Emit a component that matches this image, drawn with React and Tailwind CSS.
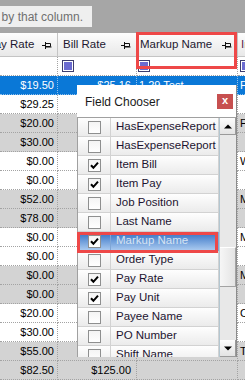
import React from 'react'

const rows = [
  { rate: '$19.50', bill: '$25.16', markup: '1.29 Test', extra: 'Full Time', sel: true },
  { rate: '$29.25' },
  { rate: '$20.00', extra: 'Full Time' },
  { rate: '$30.00' },
  { rate: '$0.00', extra: 'Weekly' },
  { rate: '$0.00' },
  { rate: '$52.00', extra: 'Monthly' },
  { rate: '$78.00' },
  { rate: '$0.00', extra: 'Monthly' },
  { rate: '$0.00' },
  { rate: '$0.00', extra: 'Monthly' },
  { rate: '$0.00' },
  { rate: '$20.00', extra: 'Contract' },
  { rate: '$30.00' },
  { rate: '$55.00', extra: 'Temp' },
  { rate: '$82.50', bill: '$125.00' },
]

const fields = [
  { name: 'HasExpenseReport', on: false },
  { name: 'HasExpenseReport', on: false },
  { name: 'Item Bill', on: true },
  { name: 'Item Pay', on: true },
  { name: 'Job Position', on: false },
  { name: 'Last Name', on: false },
  { name: 'Markup Name', on: true, sel: true },
  { name: 'Order Type', on: false },
  { name: 'Pay Rate', on: true },
  { name: 'Pay Unit', on: true },
  { name: 'Payee Name', on: false },
  { name: 'PO Number', on: false },
  { name: 'Shift Name', on: false },
]

function Pin() {
  return (
    <svg width="10" height="8" viewBox="0 0 10 8" className="shrink-0">
      <path d="M0 4.5h3.5M3.5 1v7M3.5 2.5h5v3h-5" stroke="#111" fill="none" strokeWidth="1" />
      <path d="M3.5 6h6" stroke="#111" strokeWidth="1" />
    </svg>
  )
}

function FilterIcon() {
  return (
    <span className="w-[12px] h-[12px] border border-[#3d3d6e] bg-white p-[1px] shrink-0">
      <span className="block w-full h-full bg-[#6b6bd0]" />
    </span>
  )
}

function HeaderCell({ width, children, pin = true, pad = 'pl-[4px]' }) {
  return (
    <div
      className={`${width} shrink-0 h-full flex items-center justify-between overflow-hidden whitespace-nowrap ${pad} pr-[5px] bg-linear-to-b from-[#fdfdfd] to-[#e8e8e8] border-r border-b border-[#c4c4c4]`}
    >
      {children}
      {pin && <Pin />}
    </div>
  )
}

function GridRow({ r, i }) {
  const gray = Math.floor(i / 2) % 2 === 1
  const bg = r.sel ? 'bg-[#0a78d7] text-white' : gray ? 'bg-[#d3d3d3] text-black' : 'bg-white text-black'
  const line = r.sel ? 'border-[#8fc0ec]' : 'border-[#a3a3a3]'
  return (
    <div className={`flex h-[19px] text-[11px] leading-none ${bg}`}>
      <div className={`w-[58px] shrink-0 border-r border-b border-dotted ${line} flex items-center justify-end pr-[3px]`}>
        {r.rate}
      </div>
      <div className={`w-[79px] shrink-0 border-r border-b border-dotted ${line} flex items-center justify-end pr-[5px]`}>
        {r.bill}
      </div>
      <div className={`w-[101px] shrink-0 border-r border-b border-dotted ${line} flex items-center pl-[2px]`}>
        {r.markup}
      </div>
      <div className={`flex-1 border-b border-dotted ${line} flex items-center pl-[2px] whitespace-nowrap overflow-hidden`}>
        {r.extra}
      </div>
    </div>
  )
}

function Check({ on }) {
  return (
    <span className="w-[13px] h-[13px] border border-[#8e8f8f] bg-linear-to-b from-[#f4f4f4] to-white flex items-center justify-center">
      {on && (
        <svg width="9" height="9" viewBox="0 0 9 9">
          <path d="M1 4.2L3.4 6.8L8 1.6" stroke="#000" strokeWidth="2" fill="none" />
        </svg>
      )}
    </span>
  )
}

function FieldRow({ f }) {
  const cell = f.sel
    ? 'bg-linear-to-b from-[#2f6fc2] to-[#a9c9ef] border-[#7fa6d6]'
    : 'bg-linear-to-b from-[#fefefe] to-[#ebebeb] border-[#d2d2d2]'
  return (
    <div className="flex h-[19px] shrink-0">
      <div className={`w-[33px] shrink-0 border-r border-b flex items-center pl-[10px] ${cell}`}>
        <Check on={f.on} />
      </div>
      <div
        className={`w-[108px] shrink-0 border-r border-b flex items-center pl-[5px] text-[11.5px] whitespace-nowrap ${cell} ${
          f.sel ? 'text-[#d6e3f2]' : 'text-[#1c1430]'
        }`}
      >
        {f.name}
      </div>
    </div>
  )
}

function Arrow({ up }) {
  return (
    <div className="h-[17px] shrink-0 bg-linear-to-b from-[#fdfdfd] to-[#e3e3e3] border-r border-b border-[#9a9a9a] flex items-center justify-center">
      <svg width="8" height="5" viewBox="0 0 8 5">
        <path d={up ? 'M0 4.5L4 0.5L8 4.5Z' : 'M0 0.5L4 4.5L8 0.5Z'} fill="#000" />
      </svg>
    </div>
  )
}

function FieldChooser() {
  return (
    <div className="absolute left-[77px] top-[85px] w-[160px] h-[272px] bg-white flex flex-col border-r border-[#8c8c8c]">
      <div className="h-[32px] shrink-0 flex items-center justify-between pl-[8px] pr-[3px] pt-[1px]">
        <span className="text-[12px] text-[#1a1a1a]">Field Chooser</span>
        <span className="w-[16px] h-[15px] bg-[#c75050] text-white text-[11px] font-bold leading-none flex items-center justify-center pb-[2px]">
          x
        </span>
      </div>
      <div className="flex-1 flex border-t border-l border-[#a0a0a0] overflow-hidden">
        <div className="flex flex-col">
          {fields.map((f, i) => (
            <FieldRow key={i} f={f} />
          ))}
        </div>
        <div className="w-[17px] shrink-0 flex flex-col bg-[#e8e8e8] border-l border-[#b3c6d0]">
          <Arrow up />
          <div className="h-[112px] shrink-0" />
          <div className="h-[40px] shrink-0 bg-linear-to-r from-[#f6f6f6] to-[#e4e4e4] border-r border-b border-[#a3a3a3] border-t border-t-white" />
          <div className="flex-1" />
          <Arrow />
        </div>
      </div>
      <div className="absolute left-0 top-[147px] w-[141px] h-[21px] border-[3px] border-[#ee4848]" />
    </div>
  )
}

export default function App() {
  return (
    <div className="relative w-[245px] h-[380px] overflow-hidden bg-white font-['Liberation_Sans',Arial,sans-serif]">
      <div className="h-[33px] bg-[#a6a6a6] pt-[6px]">
        <div className="w-[92px] h-[21px] bg-[#efefef] flex items-center justify-end pr-[9px] overflow-hidden whitespace-nowrap text-[12px] text-[#6f6f6f]">
          grouping by that column.
        </div>
      </div>

      <div className="flex h-[24px] text-[11.5px] text-[#1d1830]">
        <HeaderCell width="w-[58px]" pad="pl-0">
          <span className="ml-[-13px]">Pay Rate</span>
        </HeaderCell>
        <HeaderCell width="w-[79px]" pad="pl-[5px]">
          <span>Bill Rate</span>
        </HeaderCell>
        <HeaderCell width="w-[101px]" pad="pl-[3px]">
          <span>Markup Name</span>
        </HeaderCell>
        <HeaderCell width="flex-1" pin={false} pad="pl-[3px]">
          <span className="text-[#5b1f4a]">Invoice</span>
        </HeaderCell>
      </div>

      <div className="flex h-[19px] bg-white">
        <div className="w-[58px] shrink-0 border-r border-b border-dotted border-[#a3a3a3]" />
        <div className="w-[79px] shrink-0 border-r border-b border-dotted border-[#a3a3a3] flex items-center pl-[4px]">
          <FilterIcon />
        </div>
        <div className="w-[101px] shrink-0 border-r border-b border-dotted border-[#a3a3a3] flex items-center pl-[1px]">
          <FilterIcon />
        </div>
        <div className="flex-1 border-b border-dotted border-[#a3a3a3] flex items-center pl-[2px]">
          <FilterIcon />
        </div>
      </div>

      {rows.map((r, i) => (
        <GridRow key={i} r={r} i={i} />
      ))}

      <FieldChooser />

      <div className="absolute left-[136px] top-[32px] w-[101px] h-[37px] border-[3px] border-[#ee4848]" />
    </div>
  )
}
